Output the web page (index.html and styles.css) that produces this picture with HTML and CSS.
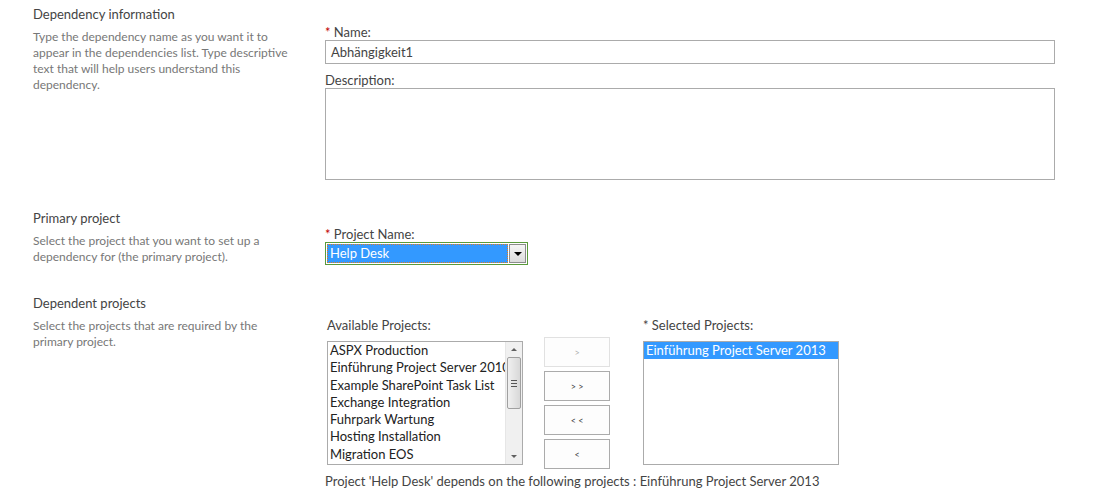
FILE: index.html
```html
<!DOCTYPE html>
<html lang="en">
<head>
    <meta charset="UTF-8">
    <title>Dependency</title>
    <link rel="stylesheet" href="styles.css">
</head>
<body>
    <div class="formulario">
        <!-- Dependency information -->
        <div class="seccion seccion-info">
            <div class="izq">
                <h3>Dependency information</h3>
                <p class="desc">Type the dependency name as you want it to appear in the dependencies list. Type descriptive text that will help users understand this dependency.</p>
            </div>
            <div class="der">
                <div class="etiqueta"><span class="req">*</span> Name:</div>
                <div class="caja">Abhängigkeit1</div>
                <div class="etiqueta etiqueta-desc">Description:</div>
                <div class="area"></div>
            </div>
        </div>

        <!-- Primary project -->
        <div class="seccion seccion-primario">
            <div class="izq">
                <h3>Primary project</h3>
                <p class="desc">Select the project that you want to set up a dependency for (the primary project).</p>
            </div>
            <div class="der">
                <div class="etiqueta"><span class="req">*</span> Project Name:</div>
                <div class="combo">
                    <div class="combo-valor"><span>Help Desk</span></div>
                    <div class="combo-flecha"><span></span></div>
                </div>
            </div>
        </div>

        <!-- Dependent projects -->
        <div class="seccion seccion-dep">
            <div class="izq">
                <h3>Dependent projects</h3>
                <p class="desc">Select the projects that are required by the primary project.</p>
            </div>
            <div class="der">
                <div class="selector">
                    <div class="columna">
                        <div class="etiqueta">Available Projects:</div>
                        <div class="lista">
                            <ul class="items">
                                <li>ASPX Production</li>
                                <li>Einführung Project Server 2010</li>
                                <li>Example SharePoint Task List</li>
                                <li>Exchange Integration</li>
                                <li>Fuhrpark Wartung</li>
                                <li>Hosting Installation</li>
                                <li>Migration EOS</li>
                            </ul>
                            <div class="scroll">
                                <div class="scroll-arriba"></div>
                                <div class="scroll-barra"><span></span><span></span><span></span></div>
                                <div class="scroll-pista"></div>
                                <div class="scroll-abajo"></div>
                            </div>
                        </div>
                    </div>
                    <div class="botones">
                        <button class="boton" disabled>&gt;</button>
                        <button class="boton">&gt; &gt;</button>
                        <button class="boton">&lt; &lt;</button>
                        <button class="boton">&lt;</button>
                    </div>
                    <div class="columna">
                        <div class="etiqueta">* Selected Projects:</div>
                        <div class="lista">
                            <ul class="items">
                                <li class="marcado">Einführung Project Server 2013</li>
                            </ul>
                        </div>
                    </div>
                </div>
                <p class="resumen">Project 'Help Desk' depends on the following projects : Einführung Project Server 2013</p>
            </div>
        </div>
    </div>
</body>
</html>
```

FILE: styles.css
```css
body {
    margin: 0;
    font-family: Lato, "Open Sans", sans-serif;
    color: #444;
    background: #fff;
}
.formulario {
    padding: 5px 0 0 33px;
}
.seccion {
    display: grid;
    grid-template-columns: 260px 730px;
    column-gap: 32px;
}
.seccion-primario {
    margin-top: 29px;
}
.seccion-dep {
    margin-top: 29px;
}
h3 {
    margin: 0;
    font-size: 13px;
    font-weight: normal;
    line-height: 18px;
    color: #444;
}
.desc {
    margin: 6px 0 0;
    font-size: 12px;
    line-height: 16px;
    color: #777;
}
.der {
    padding-top: 19px;
}
.seccion-primario .der {
    padding-top: 17px;
}
.seccion-dep .der {
    padding-top: 23px;
}
.etiqueta {
    font-size: 13px;
    line-height: 16px;
    color: #444;
}
.req {
    color: #bf0000;
}
.etiqueta-desc {
    margin-top: 8px;
}
.caja {
    box-sizing: border-box;
    height: 24px;
    margin-top: 0;
    border: 1px solid #ababab;
    padding: 0 5px;
    font-size: 13px;
    line-height: 22px;
    color: #444;
}
.area {
    box-sizing: border-box;
    width: 730px;
    height: 92px;
    border: 1px solid #ababab;
}
.combo {
    display: flex;
    box-sizing: border-box;
    width: 203px;
    height: 23px;
    border: 1px solid #5a9a3c;
    padding: 1px;
    background: #fff;
}
.combo-valor {
    flex: 1;
    background: #3399ff;
    border: 1px dotted #e07b1f;
    color: #fff;
    font-size: 13px;
    line-height: 17px;
    padding-left: 2px;
}
.combo-flecha {
    box-sizing: border-box;
    width: 17px;
    margin-left: 1px;
    border: 1px solid #8c8c8c;
    background: linear-gradient(#f6f6f6, #dcdcdc);
    display: flex;
    align-items: center;
    justify-content: center;
}
.combo-flecha span {
    width: 0;
    height: 0;
    border-left: 4px solid transparent;
    border-right: 4px solid transparent;
    border-top: 4px solid #000;
}
.selector {
    display: flex;
    align-items: flex-start;
    padding-left: 2px;
}
.columna .etiqueta {
    margin-bottom: 8px;
}
.lista {
    display: flex;
    box-sizing: border-box;
    width: 196px;
    height: 124px;
    border: 1px solid #ababab;
    background: #fff;
}
.items {
    flex: 1;
    min-width: 0;
    list-style: none;
    margin: 0;
    padding: 0;
    overflow: hidden;
    font-size: 13px;
    line-height: 17.3px;
    color: #222;
}
.items li {
    padding-left: 2px;
    white-space: nowrap;
}
.items li.marcado {
    background: #3399ff;
    color: #fff;
}
.scroll {
    width: 16px;
    display: flex;
    flex-direction: column;
    background: #f0f0f0;
    border-left: 1px solid #e6e6e6;
}
.scroll-arriba,
.scroll-abajo {
    height: 15px;
    display: flex;
    align-items: center;
    justify-content: center;
}
.scroll-arriba::after {
    content: "";
    border-left: 3px solid transparent;
    border-right: 3px solid transparent;
    border-bottom: 3px solid #606060;
}
.scroll-abajo::after {
    content: "";
    border-left: 3px solid transparent;
    border-right: 3px solid transparent;
    border-top: 3px solid #606060;
}
.scroll-barra {
    box-sizing: border-box;
    height: 52px;
    margin: 0 1px;
    border: 1px solid #a0a0a0;
    border-radius: 2px;
    background: linear-gradient(90deg, #f0f0f0, #d8d8d8);
    display: flex;
    flex-direction: column;
    justify-content: center;
    align-items: center;
    gap: 2px;
}
.scroll-barra span {
    width: 6px;
    height: 1px;
    background: #555;
}
.scroll-pista {
    flex: 1;
}
.botones {
    display: flex;
    flex-direction: column;
    gap: 4px;
    margin: 20px 33px 0 21px;
}
.boton {
    box-sizing: border-box;
    width: 66px;
    height: 30px;
    border: 1px solid #ababab;
    background: #fdfdfd;
    font-family: Lato, sans-serif;
    font-size: 9px;
    color: #444;
    padding: 0;
}
.boton:disabled {
    border-color: #e1e1e1;
    color: #b1b1b1;
}
.resumen {
    margin: 4px 0 0;
    font-size: 13px;
    line-height: 16px;
    color: #444;
}
```
